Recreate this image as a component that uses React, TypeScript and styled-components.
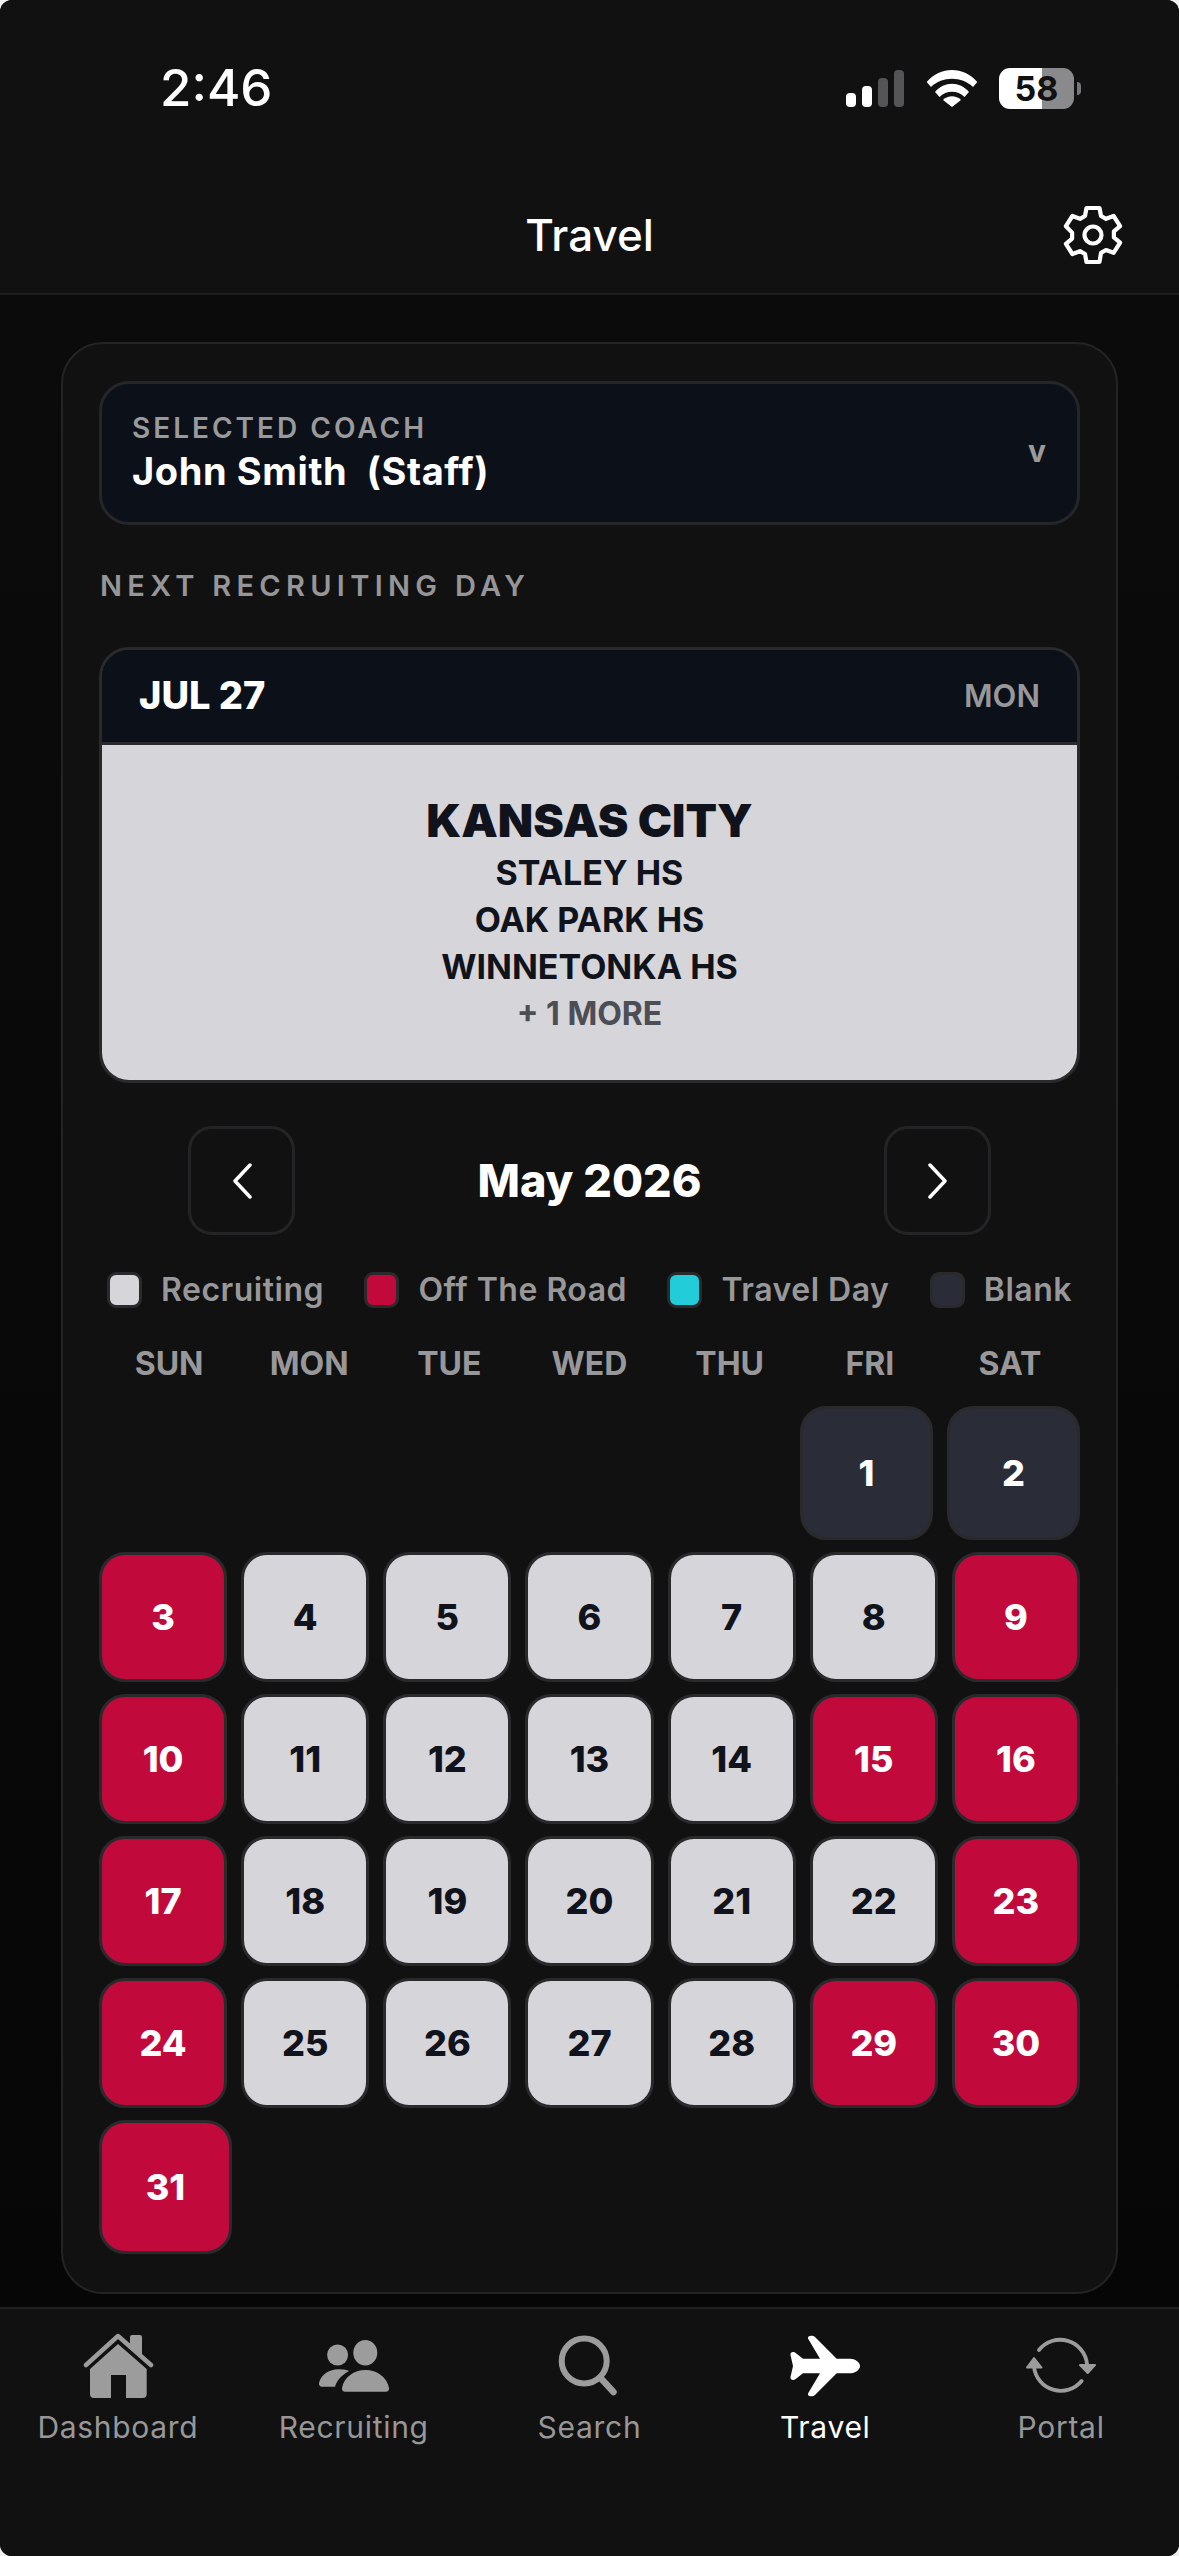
import React from 'react';
import styled, { createGlobalStyle } from 'styled-components';

type DayKind = 'road' | 'recruit' | 'blank';

const GlobalStyle = createGlobalStyle`
  * { box-sizing: border-box; }
  html, body { margin: 0; padding: 0; background: #f0f0f0; }
  body { font-family: Inter, "Noto Sans", sans-serif; }
`;

const legend = [
  { label: 'Recruiting', color: '#d5d5da' },
  { label: 'Off The Road', color: '#c1093c' },
  { label: 'Travel Day', color: '#22cdd9' },
  { label: 'Blank', color: '#2a2d37' },
];

const weekdays = ['SUN', 'MON', 'TUE', 'WED', 'THU', 'FRI', 'SAT'];

const day = (n: number, kind: DayKind) => ({ n, kind });
const r = (n: number) => day(n, 'recruit');
const o = (n: number) => day(n, 'road');

const weeks = [
  [o(3), r(4), r(5), r(6), r(7), r(8), o(9)],
  [o(10), r(11), r(12), r(13), r(14), o(15), o(16)],
  [o(17), r(18), r(19), r(20), r(21), r(22), o(23)],
  [o(24), r(25), r(26), r(27), r(28), o(29), o(30)],
];

const HomeIcon = () => (
  <svg width="72" height="66" viewBox="0 0 72 66" fill="#9c9c9c">
    <path d="M4 32 36 3l33 29" fill="none" stroke="#9c9c9c" strokeWidth="4.500" strokeLinecap="round" strokeLinejoin="round" />
    <path d="M48 14V4a2 2 0 0 1 2-2h8a2 2 0 0 1 2 2v20Z" />
    <path d="M36 11 64.700 36v25a4 4 0 0 1-4 4H44V42H29v23H12a4 4 0 0 1-4-4V36Z" />
  </svg>
);

const PeopleIcon = () => (
  <svg width="72" height="66" viewBox="0 0 72 66" fill="#9c9c9c">
    <circle cx="19.600" cy="22" r="10.500" />
    <ellipse cx="47.300" cy="19.700" rx="12" ry="12.700" />
    <path d="M1 50C3 41 12 36.300 20 36.300c6 0 9 .7 11 1.700-7 4-12 9-14 15.700H4C2 53.700.5 52 1 50Z" />
    <path d="M24 55c2-11 12-18 23.500-18S69 44 71 55c.5 2-1 3.700-3 3.700H27c-2 0-3.500-1.700-3-3.700Z" />
  </svg>
);

const SearchIcon = () => (
  <svg width="62" height="66" viewBox="0 0 62 66" fill="none" stroke="#9c9c9c">
    <circle cx="26.200" cy="28" r="22.500" strokeWidth="6" />
    <path d="M43.500 46 55.500 59" strokeWidth="6.500" strokeLinecap="round" />
  </svg>
);

const PlaneIcon = () => (
  <svg width="72" height="66" viewBox="0 0 72 66" fill="#fff">
    <path d="M61 25.700c5 0 10 3.300 10 7.300s-5 7.300-10 7.300H47.700L26 62c-1.500 2-8 2-7-1.500l12-20.200H14L6 46.500c-2.500 1-5 0-4.500-2.500L4 33 1.500 22c-.5-2.500 2-3.500 4.500-2.500l8 6.200h17L19 5.500C18 2 24.500 2 26 4l21.700 21.700Z" />
  </svg>
);

const PortalIcon = () => (
  <svg width="72" height="66" viewBox="0 0 72 66" fill="none" stroke="#9c9c9c" strokeWidth="3.800">
    <path d="M14 17A27 27 0 0 1 62 31" strokeLinecap="round" />
    <path d="M56.600 48A27 27 0 0 1 9 34" strokeLinecap="round" />
    <path d="M55 32h15l-7.300 8Z" fill="#9c9c9c" strokeWidth="2" strokeLinejoin="round" />
    <path d="M2 34.500h14.500L9 25Z" fill="#9c9c9c" strokeWidth="2" strokeLinejoin="round" />
  </svg>
);

const GearIcon = () => (
  <svg width="60" height="60" viewBox="0 0 60 60" fill="none" stroke="#fff" strokeWidth="4.200" strokeLinejoin="round">
    <path d="M23.500 3h13l1.500 8 5 2.800 7.600-2.800 6.500 10.200-6.200 5.200v6l6.200 5.200-6.500 10.200-7.600-2.800-5 2.800L36.500 57h-13L22 49l-5-2.800-7.600 2.800-6.500-10.200 6.200-5.200v-6L2.900 21.200l6.500-10.200L17 13.800l5-2.800Z" />
    <circle cx="30" cy="30" r="8.500" />
  </svg>
);

const ChevronIcon = ({ flip }: { flip?: boolean }) => (
  <svg width="22" height="36" viewBox="0 0 22 36" fill="none" stroke="#fff" strokeWidth="3.500" strokeLinecap="round" strokeLinejoin="round">
    <path d={flip ? 'M3 2l15 16L3 34' : 'M19 2L4 18l15 16'} />
  </svg>
);

const SignalIcon = () => (
  <svg width="58" height="38" viewBox="0 0 58 38">
    <rect x="0" y="23" width="10" height="14" rx="4" fill="#fff" />
    <rect x="16" y="16" width="10" height="21" rx="4" fill="#fff" />
    <rect x="32" y="8" width="10" height="29" rx="4" fill="#555558" />
    <rect x="48" y="0" width="10" height="37" rx="4" fill="#555558" />
  </svg>
);

const WifiIcon = () => (
  <svg width="52" height="38" viewBox="0 0 52 38" fill="#fff">
    <path d="M.7 12C14-4 38-4 51.300 12L47 17C36 6 16 6 5 17Z" />
    <path d="M9 22c9-11 25-11 34 0l-4.500 5c-6.500-7-18.500-7-25 0Z" />
    <path d="M26 37l-9-7c5-5 13-5 18 0Z" />
  </svg>
);

export default function App() {
  return (
    <Screen>
      <GlobalStyle />
      <TopBar>
        <StatusBar>
          <Clock>2:46</Clock>
          <StatusIcons>
            <SignalIcon />
            <WifiIcon />
            <Battery>
              <BatteryBody>58</BatteryBody>
              <BatteryCap />
            </Battery>
          </StatusIcons>
        </StatusBar>
        <TitleRow>
          <Title>Travel</Title>
          <GearSlot>
            <GearIcon />
          </GearSlot>
        </TitleRow>
      </TopBar>

      <Content>
        <Panel>
          <CoachSelect>
            <div>
              <CoachLabel>SELECTED COACH</CoachLabel>
              <CoachName>John Smith&nbsp;&nbsp;(Staff)</CoachName>
            </div>
            <CoachCaret>v</CoachCaret>
          </CoachSelect>

          <SectionLabel>NEXT RECRUITING DAY</SectionLabel>

          <NextCard>
            <NextHeader>
              <NextDate>JUL 27</NextDate>
              <NextWeekday>MON</NextWeekday>
            </NextHeader>
            <NextBody>
              <City>KANSAS CITY</City>
              <School>STALEY HS</School>
              <School>OAK PARK HS</School>
              <School>WINNETONKA HS</School>
              <More>+ 1 MORE</More>
            </NextBody>
          </NextCard>

          <MonthNav>
            <NavButton><ChevronIcon /></NavButton>
            <MonthTitle>May 2026</MonthTitle>
            <NavButton><ChevronIcon flip /></NavButton>
          </MonthNav>

          <Legend>
            {legend.map((item) => (
              <LegendItem key={item.label}>
                <Swatch $color={item.color} />
                {item.label}
              </LegendItem>
            ))}
          </Legend>

          <Weekdays>
            {weekdays.map((w) => (
              <Weekday key={w}>{w}</Weekday>
            ))}
          </Weekdays>

          <Calendar>
            <EndRow>
              <BigDay $kind="blank">1</BigDay>
              <BigDay $kind="blank">2</BigDay>
            </EndRow>
            {weeks.map((week) => (
              <Week key={week[0].n}>
                {week.map((d) => (
                  <Day key={d.n} $kind={d.kind}>{d.n}</Day>
                ))}
              </Week>
            ))}
            <StartRow>
              <BigDay $kind="road">31</BigDay>
            </StartRow>
          </Calendar>
        </Panel>
      </Content>

      <TabBar>
        <Tab><TabIcon><HomeIcon /></TabIcon>Dashboard</Tab>
        <Tab><TabIcon><PeopleIcon /></TabIcon>Recruiting</Tab>
        <Tab><TabIcon><SearchIcon /></TabIcon>Search</Tab>
        <Tab $active><TabIcon><PlaneIcon /></TabIcon>Travel</Tab>
        <Tab><TabIcon><PortalIcon /></TabIcon>Portal</Tab>
      </TabBar>
    </Screen>
  );
}

const Screen = styled.div`
  width: 1179px;
  height: 2556px;
  display: flex;
  flex-direction: column;
  background: #090909;
  border-radius: 12px;
  overflow: hidden;
`;

const TopBar = styled.header`
  height: 295px;
  flex-shrink: 0;
  background: #111112;
  border-bottom: 2px solid #1f1f21;
`;

const StatusBar = styled.div`
  height: 176px;
  padding: 60px 98px 0 160px;
  display: flex;
  justify-content: space-between;
  align-items: flex-start;
`;

const Clock = styled.div`
  color: #fff;
  font-size: 51px;
  line-height: 56px;
  font-weight: 500;
`;

const StatusIcons = styled.div`
  display: flex;
  align-items: center;
  gap: 21.500px;
  margin-top: 8px;
`;

const Battery = styled.div`
  display: flex;
  align-items: center;
  gap: 3px;
`;

const BatteryBody = styled.div`
  width: 75px;
  height: 41px;
  border-radius: 11px;
  background: linear-gradient(90deg, #fff 0 57%, #8a8a8d 57% 100%);
  color: #111;
  font-size: 34px;
  font-weight: 700;
  line-height: 41px;
  text-align: center;
`;

const BatteryCap = styled.div`
  width: 4px;
  height: 13px;
  border-radius: 0 4px 4px 0;
  background: #77777a;
`;

const TitleRow = styled.div`
  height: 117px;
  position: relative;
  display: flex;
  align-items: center;
  justify-content: center;
`;

const Title = styled.div`
  color: #fff;
  font-size: 44px;
  font-weight: 500;
  line-height: 60px;
`;

const GearSlot = styled.div`
  position: absolute;
  right: 56px;
  top: 29px;
  line-height: 0;
`;

const Content = styled.main`
  flex: 1;
  min-height: 0;
  padding: 47px 61px 0;
  background: linear-gradient(180deg, #0b0b0b 0%, #060606 100%);
`;

const Panel = styled.section`
  height: 1952px;
  padding: 37px 36px 0;
  background: #111112;
  border: 2px solid #242426;
  border-radius: 42px;
`;

const CoachSelect = styled.div`
  height: 144px;
  padding: 0 31px 0 30px;
  display: flex;
  align-items: center;
  justify-content: space-between;
  background: #0c1019;
  border: 3px solid #25262a;
  border-radius: 30px;
`;

const CoachLabel = styled.div`
  color: #9a9a9c;
  font-size: 28px;
  font-weight: 600;
  letter-spacing: 3px;
  line-height: 32px;
`;

const CoachName = styled.div`
  margin-top: 4px;
  color: #fff;
  font-size: 38px;
  font-weight: 700;
  letter-spacing: 0.600px;
  line-height: 46px;
`;

const CoachCaret = styled.div`
  color: #9a9a9c;
  font-size: 30px;
  font-weight: 700;
  margin-top: -4px;
`;

const SectionLabel = styled.div`
  margin: 43px 0 0 1px;
  color: #969698;
  font-size: 29px;
  font-weight: 600;
  letter-spacing: 5.300px;
  line-height: 36px;
`;

const NextCard = styled.div`
  margin-top: 43px;
  height: 436px;
  border: 3px solid #2a2a2d;
  border-radius: 30px;
  overflow: hidden;
  display: flex;
  flex-direction: column;
`;

const NextHeader = styled.div`
  height: 95px;
  padding: 0 37px 2px 37px;
  display: flex;
  align-items: center;
  justify-content: space-between;
  background: #0c1019;
  border-bottom: 3px solid #2a2a2d;
`;

const NextDate = styled.div`
  color: #fff;
  font-size: 38px;
  font-weight: 800;
`;

const NextWeekday = styled.div`
  color: #98989a;
  font-size: 31px;
  font-weight: 600;
`;

const NextBody = styled.div`
  flex: 1;
  padding-top: 46px;
  background: #d5d5da;
  color: #10131b;
  display: flex;
  flex-direction: column;
  align-items: center;
`;

const City = styled.div`
  font-size: 46px;
  font-weight: 900;
  line-height: 58px;
`;

const School = styled.div`
  font-size: 34px;
  font-weight: 700;
  line-height: 47px;
`;

const More = styled.div`
  margin-top: 2px;
  color: #4d4d55;
  font-size: 32px;
  font-weight: 700;
  line-height: 44px;
`;

const MonthNav = styled.div`
  margin-top: 43px;
  padding: 0 89px;
  display: flex;
  align-items: center;
  justify-content: space-between;
`;

const NavButton = styled.div`
  width: 107px;
  height: 109px;
  display: flex;
  align-items: center;
  justify-content: center;
  border: 3px solid #242426;
  border-radius: 24px;
`;

const MonthTitle = styled.div`
  color: #fff;
  font-size: 45px;
  font-weight: 800;
`;

const Legend = styled.div`
  margin-top: 37px;
  padding: 0 8px;
  display: flex;
  justify-content: space-between;
`;

const LegendItem = styled.div`
  display: flex;
  align-items: center;
  gap: 19px;
  color: #98989a;
  font-size: 32px;
  font-weight: 600;
  letter-spacing: 0.500px;
  line-height: 36px;
`;

const Swatch = styled.span<{ $color: string }>`
  width: 35px;
  height: 36px;
  border-radius: 9px;
  background: ${(p) => p.$color};
  border: 3px solid #2a2a2d;
`;

const Weekdays = styled.div`
  margin-top: 37px;
  display: grid;
  grid-template-columns: repeat(7, 1fr);
`;

const Weekday = styled.div`
  color: #98989a;
  text-align: center;
  font-size: 32px;
  font-weight: 700;
  line-height: 38px;
`;

const Calendar = styled.div`
  margin-top: 23px;
  display: flex;
  flex-direction: column;
  gap: 12px;
`;

const Week = styled.div`
  display: grid;
  grid-template-columns: repeat(7, 1fr);
  column-gap: 14px;
`;

const EndRow = styled.div`
  display: flex;
  justify-content: flex-end;
  gap: 14px;
`;

const StartRow = styled.div`
  display: flex;
  justify-content: flex-start;
`;

const kindColors: Record<DayKind, { bg: string; fg: string }> = {
  road: { bg: '#c1093c', fg: '#fff' },
  recruit: { bg: '#d5d5da', fg: '#10131b' },
  blank: { bg: '#2a2d37', fg: '#fff' },
};

const Day = styled.div<{ $kind: DayKind }>`
  height: 130px;
  display: flex;
  align-items: center;
  justify-content: center;
  background: ${(p) => kindColors[p.$kind].bg};
  color: ${(p) => kindColors[p.$kind].fg};
  border: 3px solid #2a2a2d;
  border-radius: 26px;
  font-size: 36px;
  font-weight: 800;
`;

const BigDay = styled(Day)`
  width: 133px;
  height: 134px;
`;

const TabBar = styled.nav`
  height: 249px;
  flex-shrink: 0;
  padding-top: 24px;
  background: #111112;
  border-top: 2px solid #1f1f21;
  display: grid;
  grid-template-columns: repeat(5, 1fr);
  align-items: start;
`;

const Tab = styled.div<{ $active?: boolean }>`
  display: flex;
  flex-direction: column;
  align-items: center;
  color: ${(p) => (p.$active ? '#fff' : '#979799')};
  font-size: 30px;
  line-height: 38px;
  letter-spacing: 0.700px;
`;

const TabIcon = styled.div`
  height: 68px;
  margin-bottom: 7px;
  display: flex;
  align-items: flex-start;
  justify-content: center;
`;
